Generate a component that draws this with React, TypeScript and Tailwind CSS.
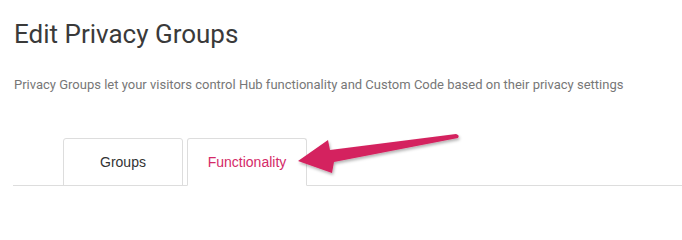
import React from 'react';

const tabs = ['Groups', 'Functionality'];

export default function App() {
    const active = 'Functionality';

    return (
        <div className="relative w-full h-[223px] bg-white overflow-hidden font-['Roboto',sans-serif]">
            <div className="pl-[14px] pt-[18px]">
                <h1 className="text-[26px] leading-8 text-[#3a3a3a] font-normal">Edit Privacy Groups</h1>
                <p className="mt-[25px] text-[13px] leading-5 text-[#777]">
                    Privacy Groups let your visitors control Hub functionality and Custom Code based on their privacy settings
                </p>
            </div>

            <div className="ml-[13px] mt-[43px] flex gap-[4px] pl-[50px] border-b border-[#ddd]">
                {tabs.map((tab) => (
                    <div
                        key={tab}
                        className={`w-[120px] h-[48px] -mb-px flex items-center justify-center text-[14px] font-['Liberation_Sans',Arial,sans-serif] border border-[#ddd] rounded-t-[3px] ${
                            tab === active ? 'border-b-white bg-white text-[#d42a68]' : 'text-[#333]'
                        }`}
                    >
                        {tab}
                    </div>
                ))}
            </div>

            {/* annotation arrow */}
            <svg className="absolute left-0 top-0 pointer-events-none" width="682" height="223" viewBox="0 0 682 223">
                <defs>
                    <filter id="sh" x="-20%" y="-50%" width="140%" height="200%">
                        <feDropShadow dx="1" dy="2" stdDeviation="1.5" floodColor="#000" floodOpacity="0.3" />
                    </filter>
                </defs>
                <path
                    d="M298 161 L328 140 L330 150 L456 134 Q460 135 458 138 L334 162 L332 173 Z"
                    fill="#d4235f"
                    filter="url(#sh)"
                />
            </svg>
        </div>
    );
}
